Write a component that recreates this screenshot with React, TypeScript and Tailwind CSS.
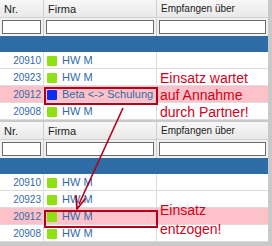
const rowsA = [
  { nr: "20910", color: "bg-[#8fe010]", name: "HW M", hi: false },
  { nr: "20923", color: "bg-[#8fe010]", name: "HW M", hi: false },
  { nr: "20912", color: "bg-[#0a2cf5]", name: "Beta <-> Schulung", hi: true },
  { nr: "20908", color: "bg-[#8fe010]", name: "HW M", hi: false },
];

const rowsB = [
  { nr: "20910", color: "bg-[#8fe010]", name: "HW M", hi: false },
  { nr: "20923", color: "bg-[#8fe010]", name: "HW M", hi: false },
  { nr: "20912", color: "bg-[#8fe010]", name: "HW M", hi: true },
  { nr: "20908", color: "bg-[#8fe010]", name: "HW M", hi: false },
];

type Row = { nr: string; color: string; name: string; hi: boolean };

function Grid({ rows }: { rows: Row[] }) {
  return (
    <div className="w-[268px] bg-white">
      <div className="grid grid-cols-[44px_113px_111px] h-[18px] bg-gradient-to-b from-[#f7f7f7] to-[#e9e9e9] text-[11px] text-[#222] border-b border-[#d0d0d0]">
        <div className="pl-[4px] leading-[18px] border-r border-[#cfcfcf]">Nr.</div>
        <div className="pl-[4px] leading-[18px] border-r border-[#cfcfcf]">Firma</div>
        <div className="pl-[4px] leading-[18px] text-[10px]">Empfangen über</div>
      </div>
      <div className="grid grid-cols-[44px_113px_111px] h-[18px] bg-[#f1f1f1]">
        <div className="px-[2px] pt-[2px] border-r border-[#cfcfcf]">
          <div className="h-[14px] bg-white border border-[#6a6a6a]" />
        </div>
        <div className="px-[2px] pt-[2px] border-r border-[#cfcfcf]">
          <div className="h-[14px] bg-white border border-[#6a6a6a]" />
        </div>
        <div className="px-[2px] pt-[2px]">
          <div className="h-[14px] bg-white border border-[#6a6a6a]" />
        </div>
      </div>
      <div className="h-[16px] bg-[#2d6ca5]" />
      {rows.map((r, i) => (
        <div
          key={i}
          className={`grid grid-cols-[44px_113px_111px] h-[17px] border-b border-[#dcdcdc] ${r.hi ? "bg-[#fdc2c9]" : "bg-white"}`}
        >
          <div className="pr-[2px] text-right text-[10px] leading-[17px] text-[#2f6aa8] border-r border-[#dcdcdc]">{r.nr}</div>
          <div className="flex items-center gap-[5px] pl-[3px] border-r border-[#dcdcdc]">
            <span className={`shrink-0 w-[10px] h-[10px] rounded-[1px] ${r.color}`} />
            <span className="whitespace-nowrap text-[11px] leading-[17px] text-[#2f6aa8]">{r.name}</span>
          </div>
          <div />
        </div>
      ))}
    </div>
  );
}

export default function App() {
  return (
    <div
      className="relative w-[272px] h-[246px] bg-[#c9c9c9] overflow-hidden"
      style={{ fontFamily: '"Liberation Sans", Arial, sans-serif' }}
    >
      <div className="flex flex-col gap-[2px]">
        <Grid rows={rowsA} />
        <Grid rows={rowsB} />
      </div>

      <div className="absolute left-[44px] top-[87px] w-[114px] h-[18px] border-2 border-[#b3001b]" />
      <div className="absolute left-[44px] top-[210px] w-[114px] h-[18px] border-2 border-[#b3001b]" />

      <div className="absolute left-[160px] top-[70px] text-[14px] leading-[17px] text-[#d0021b]">
        <div>Einsatz wartet</div>
        <div>auf Annahme</div>
        <div>durch Partner!</div>
      </div>
      <div className="absolute left-[160px] top-[201px] text-[14px] leading-[19px] text-[#d0021b]">
        <div>Einsatz</div>
        <div>entzogen!</div>
      </div>

      <svg className="absolute left-0 top-0" width="272" height="246" viewBox="0 0 272 246">
        <line x1="123" y1="108" x2="79" y2="204" stroke="#b3001b" strokeWidth="1.6" />
        <path d="M77 209 L76 196 M77 209 L85 199" stroke="#b3001b" strokeWidth="1.8" fill="none" strokeLinecap="round" />
      </svg>
    </div>
  );
}
